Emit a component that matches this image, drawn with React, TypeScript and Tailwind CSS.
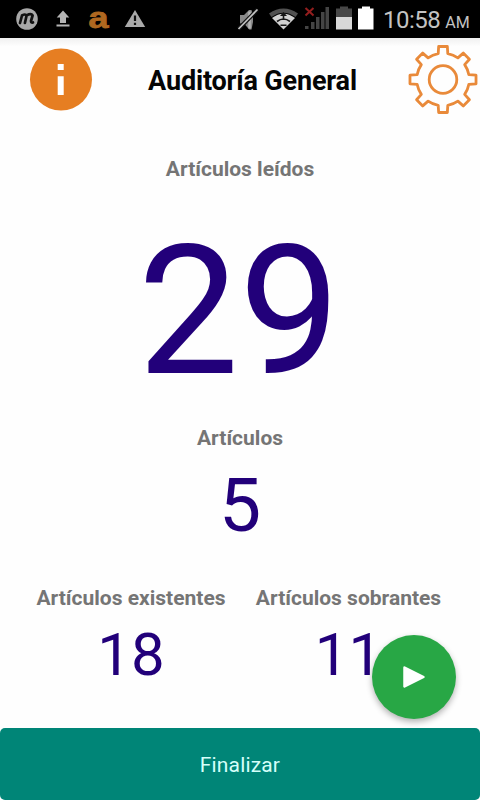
import React from "react";

function StatusBar() {
  return (
    <header className="flex h-[38px] shrink-0 bg-black">
      <svg width="380" height="38" viewBox="0 0 380 38" className="shrink-0">
        <circle cx="27" cy="19" r="10.8" fill="#a8a8a8" />
        <g fill="none" stroke="#111" strokeWidth="2.7" strokeLinecap="round" strokeLinejoin="round">
          <path d="M20 23l2-7.500q3.500-2 4.600 0l-1.700 7.500M26.600 15.500q4.600-2.500 6 0l-1.600 5.500q0 2 2 1.500" />
        </g>
        <path d="M63 10.500l6.300 7h-3.300v5.500h-6v-5.500h-3.300zM56.500 24.600h13v1.900h-13z" fill="#b4b4b4" />
        <text x="88.500" y="27.800" fontSize="30" fontWeight="900" textLength="20" lengthAdjust="spacingAndGlyphs" fill="#b06820" stroke="#b06820" strokeWidth="0.8" className="font-['Liberation_Sans',sans-serif]">a</text>
        <path d="M135 10l10.200 17h-20.400z" fill="#aaa" />
        <path d="M135 15.500v5.500M135 22.800v2.200" stroke="#111" strokeWidth="2.200" />
        <path d="M240 15h4l5-5h2.500l1.500 5v7l-1.500 7.500h-2.300l-5.200-6h-4z" fill="#898989" />
        <path d="M249.500 11.500v17" stroke="#b5b5b5" strokeWidth="2.500" />
        <path d="M238.500 29L257.500 9.500" stroke="#111" strokeWidth="4" />
        <path d="M238.500 29L257.500 9.500" stroke="#c4c4c4" strokeWidth="1.700" />
        <path d="M269 13.500q14.500-10 29 0l-2.500 3.500q-12-8.500-24 0z" fill="#515151" />
        <path d="M272 18q11.500-8.500 23 0l-11.500 11.500z" fill="#d2d2d2" />
        <path d="M277 21.500q6.500-5 13 0M283.500 16v4M280.500 25.300h6" stroke="#171717" strokeWidth="1.600" fill="none" />
        <path d="M283.500 12l3.500 4h-7z" fill="#151515" />
        <g fill="#444">
          <path d="M305 26h3.500v3H305zM311 22h3.500v7H311zM316 17h3.500v12H316zM321 12h3.500v17H321zM325.500 7h3.500v22h-3.500z" />
        </g>
        <path d="M305.500 8l8 7.500M313.500 8l-8 7.500" stroke="#941e1e" strokeWidth="2" />
        <path d="M336 8.500h4V6.500h8v2h4V17h-16z" fill="#484848" />
        <path d="M336 17h16v12.500h-16z" fill="#d8d8d8" />
        <path d="M358 8.500h4V6.500h8v2h3.500v21H358z" fill="#fff" />
      </svg>
      <div className="relative top-[1px] ml-[3px] flex items-baseline whitespace-nowrap text-[#c3c3c3]">
        <span className="text-[24px] leading-[38px] tracking-[-0.5px]">10:58</span>
        <span className="ml-[5px] text-[16px]">AM</span>
      </div>
    </header>
  );
}

function InfoIcon() {
  return (
    <svg width="64" height="64" viewBox="0 0 64 64">
      <circle cx="32" cy="31.500" r="31" fill="#e67e22" />
      <path d="M28.700 16h6v6h-6zM28.700 28.300h6v18.700h-6z" fill="#fff" />
    </svg>
  );
}

function GearIcon() {
  const point = (radius: number, degrees: number) => {
    const a = (degrees * Math.PI) / 180;
    return `${(36 + radius * Math.cos(a)).toFixed(2)} ${(35.5 + radius * Math.sin(a)).toFixed(2)}`;
  };
  const parts: string[] = [];
  for (let i = 0; i < 8; i++) {
    const c = i * 45 - 90;
    parts.push(`${i ? "L" : "M"}${point(26.3, c - 10.5)}L${point(33.3, c - 7.5)}L${point(33.3, c + 7.5)}L${point(26.3, c + 10.5)}`);
    parts.push(`A26.3 26.3 0 0 1 ${point(26.3, c + 34.5)}`);
  }
  return (
    <svg width="72" height="72" viewBox="0 0 72 72" fill="none" stroke="#e98a3a" strokeWidth="2.800" strokeLinejoin="round">
      <path d={parts.join("") + "Z"} />
      <circle cx="36" cy="35.500" r="13.800" />
    </svg>
  );
}

function Label({ children }: { children: React.ReactNode }) {
  return <h2 className="whitespace-nowrap text-[21px] font-bold leading-[30px] text-[#757575]">{children}</h2>;
}

export default function App() {
  return (
    <div className="relative flex h-[800px] w-[480px] flex-col overflow-hidden bg-[#fefefe] font-[Roboto,sans-serif]">
      <StatusBar />
      <div className="flex h-[84px] shrink-0 items-center justify-between bg-gradient-to-b from-[#f0f0f0] via-[#fefefe] via-10% to-[#fefefe] pl-[29px] pr-[1px]">
        <InfoIcon />
        <h1 className="ml-[5px] mt-[2px] whitespace-nowrap text-[27px] font-bold leading-[38px] tracking-[-0.17px] text-[#050505]">Auditoría General</h1>
        <GearIcon />
      </div>
      <main className="flex flex-1 flex-col items-center text-[#22007a]">
        <div className="mt-[32px]"><Label>Artículos leídos</Label></div>
        <div className="mt-[22px] pr-[2px] text-[180px] leading-[212px]">29</div>
        <div className="mt-[5px]"><Label>Artículos</Label></div>
        <div className="mt-[8px] text-[75px] leading-[88px]">5</div>
        <div className="mt-[34px] flex w-full">
          <section className="ml-[22px] flex w-[218px] flex-col items-center">
            <Label>Artículos existentes</Label>
            <div className="mt-[7px] text-[60px] leading-[70px]">18</div>
          </section>
          <section className="flex w-[217px] flex-col items-center">
            <Label>Artículos sobrantes</Label>
            <div className="mt-[7px] text-[60px] leading-[70px]">11</div>
          </section>
        </div>
      </main>
      <button className="h-[72px] shrink-0 rounded-[5px] bg-[#008577] pt-[3px] text-[21px] tracking-[0.15px] text-[#d5fffa]">Finalizar</button>
      <button aria-label="Continuar" className="absolute left-[372px] top-[635px] flex h-[84px] w-[84px] items-center justify-center rounded-full bg-[#28a745] shadow-[0_3px_6px_rgba(0,0,0,0.3)]">
        <svg width="26" height="26" viewBox="0 0 26 26">
          <path d="M3.500 3.500L22.500 13L3.500 22.500z" fill="#fff" stroke="#fff" strokeWidth="2.500" strokeLinejoin="round" />
        </svg>
      </button>
    </div>
  );
}
